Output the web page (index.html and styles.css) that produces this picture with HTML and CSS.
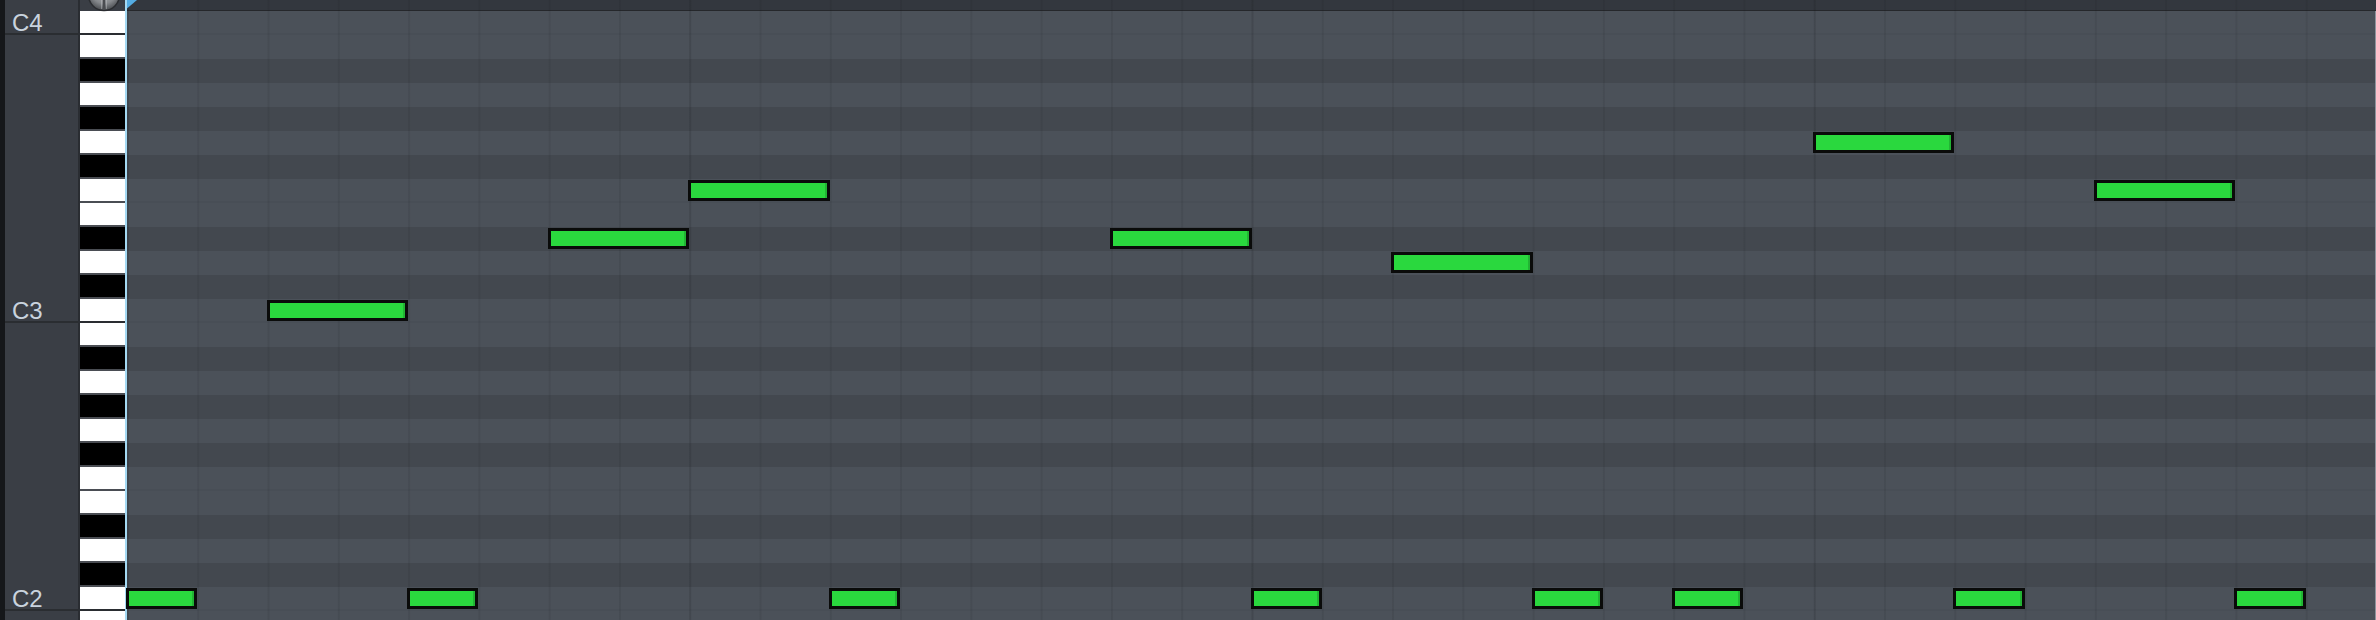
FILE: index.html
```html
<!DOCTYPE html>
<html>
<head>
<meta charset="utf-8">
<link rel="stylesheet" href="styles.css">
</head>
<body>
<div class="app">
  <div class="edge"></div>
  <div class="labels">
    <div class="lab c">C4</div><div class="lab"></div><div class="lab"></div><div class="lab"></div>
    <div class="lab"></div><div class="lab"></div><div class="lab"></div><div class="lab"></div>
    <div class="lab"></div><div class="lab"></div><div class="lab"></div><div class="lab"></div>
    <div class="lab c">C3</div><div class="lab"></div><div class="lab"></div><div class="lab"></div>
    <div class="lab"></div><div class="lab"></div><div class="lab"></div><div class="lab"></div>
    <div class="lab"></div><div class="lab"></div><div class="lab"></div><div class="lab"></div>
    <div class="lab c">C2</div><div class="lab"></div>
  </div>
  <div class="keys">
    <div class="key w c"></div><div class="key w"></div><div class="key b"></div><div class="key w"></div>
    <div class="key b"></div><div class="key w"></div><div class="key b"></div><div class="key w"></div>
    <div class="key w"></div><div class="key b"></div><div class="key w"></div><div class="key b"></div>
    <div class="key w c"></div><div class="key w"></div><div class="key b"></div><div class="key w"></div>
    <div class="key b"></div><div class="key w"></div><div class="key b"></div><div class="key w"></div>
    <div class="key w"></div><div class="key b"></div><div class="key w"></div><div class="key b"></div>
    <div class="key w c"></div><div class="key w"></div>
  </div>
  <div class="playhead"></div>
  <div class="roll">
    <div class="ruler"></div>
    <div class="lanes">
      <div class="lane w c"></div><div class="lane w"></div><div class="lane b"></div><div class="lane w"></div>
      <div class="lane b"></div><div class="lane w"></div><div class="lane b"></div><div class="lane w f"></div>
      <div class="lane w"></div><div class="lane b"></div><div class="lane w"></div><div class="lane b"></div>
      <div class="lane w c"></div><div class="lane w"></div><div class="lane b"></div><div class="lane w"></div>
      <div class="lane b"></div><div class="lane w"></div><div class="lane b"></div><div class="lane w f"></div>
      <div class="lane w"></div><div class="lane b"></div><div class="lane w"></div><div class="lane b"></div>
      <div class="lane w c"></div><div class="lane w"></div>
      <div class="notes">
        <div class="note" style="grid-area: 25 / 1 / span 1 / span 1"></div>
        <div class="note" style="grid-area: 13 / 3 / span 1 / span 2"></div>
        <div class="note" style="grid-area: 25 / 5 / span 1 / span 1"></div>
        <div class="note" style="grid-area: 10 / 7 / span 1 / span 2"></div>
        <div class="note" style="grid-area: 8 / 9 / span 1 / span 2"></div>
        <div class="note" style="grid-area: 25 / 11 / span 1 / span 1"></div>
        <div class="note" style="grid-area: 10 / 15 / span 1 / span 2"></div>
        <div class="note" style="grid-area: 25 / 17 / span 1 / span 1"></div>
        <div class="note" style="grid-area: 11 / 19 / span 1 / span 2"></div>
        <div class="note" style="grid-area: 25 / 21 / span 1 / span 1"></div>
        <div class="note" style="grid-area: 25 / 23 / span 1 / span 1"></div>
        <div class="note" style="grid-area: 6 / 25 / span 1 / span 2"></div>
        <div class="note" style="grid-area: 25 / 27 / span 1 / span 1"></div>
        <div class="note" style="grid-area: 8 / 29 / span 1 / span 2"></div>
        <div class="note" style="grid-area: 25 / 31 / span 1 / span 1"></div>
      </div>
    </div>
    <div class="beatlines"></div>
  </div>
  <svg class="knob" width="34" height="12" viewBox="0 0 34 12">
    <defs>
      <radialGradient id="kg" cx="0.5" cy="0.35" r="0.6">
        <stop offset="0" stop-color="#b4b6b9"/>
        <stop offset="0.7" stop-color="#85888c"/>
        <stop offset="1" stop-color="#55585c"/>
      </radialGradient>
    </defs>
    <circle cx="17" cy="-5" r="15.5" fill="url(#kg)" stroke="#2a2c30" stroke-width="1.5"/>
    <line x1="17" y1="-4" x2="17" y2="10" stroke="#4a4c50" stroke-width="2.2"/>
    <line x1="14.6" y1="-4" x2="14.6" y2="9" stroke="#c8cacd" stroke-width="0.8" opacity="0.6"/>
    <line x1="19.4" y1="-4" x2="19.4" y2="9" stroke="#c8cacd" stroke-width="0.8" opacity="0.6"/>
  </svg>
  <svg class="marker" width="10" height="9" viewBox="0 0 10 9">
    <polygon points="0,0 10,0 0,8.5" fill="#54ace3"/>
  </svg>
</div>
</body>
</html>
```

FILE: styles.css
```css
html, body {
  margin: 0;
  padding: 0;
}
body {
  width: 2376px;
  height: 620px;
  overflow: hidden;
  background: #3a3e45;
  font-family: "Liberation Sans", Arial, sans-serif;
}
.app {
  position: relative;
  display: flex;
  width: 2376px;
  height: 620px;
  overflow: hidden;
}
.edge {
  width: 5px;
  flex: none;
  background: #15171a;
}
.labels {
  width: 73px;
  flex: none;
  padding-top: 11px;
  background: #3a3e45;
  border-right: 2px solid #2a2d32;
}
.lab {
  height: 24px;
  box-sizing: border-box;
  padding-left: 7px;
  font-size: 24px;
  line-height: 24px;
  color: #c9d3de;
}
.lab.c {
  border-bottom: 2px solid #2a2d31;
}
.keys {
  width: 45px;
  flex: none;
  padding-top: 11px;
  background: #3a3e45;
}
.key {
  height: 24px;
  box-sizing: border-box;
  border-bottom: 2px solid #4a4d53;
}
.key.w { background: #ffffff; }
.key.b { background: #000000; }
.key.c { border-bottom-color: #2a2d31; }
.playhead {
  width: 2px;
  flex: none;
  background: #a4d9f3;
}
.roll {
  position: relative;
  flex: 1;
  display: flex;
  flex-direction: column;
}
.ruler {
  height: 10px;
  flex: none;
  background: #33373e;
  border-bottom: 1px solid #25272b;
}
.lanes {
  position: relative;
  flex: 1;
}
.lanes::after {
  content: "";
  position: absolute;
  top: 0;
  right: 0;
  bottom: 0;
  width: 1px;
  background: #8d949c;
  z-index: 3;
}
.lane {
  height: 24px;
  box-sizing: border-box;
}
.lane.w { background: #4b5159; }
.lane.b { background: #43484f; }
.lane.c, .lane.f {
  border-bottom: 2px solid #484e56;
}
.beatlines {
  position: absolute;
  inset: 0;
  z-index: 1;
  pointer-events: none;
  background-image:
    linear-gradient(to right, rgba(18, 20, 24, 0.07) 0 2px, transparent 2px),
    linear-gradient(to right, rgba(18, 20, 24, 0.09) 0 2px, transparent 2px);
  background-size: 562.25px 100%, 70.28125px 100%;
  background-repeat: repeat-x;
}
.notes {
  position: absolute;
  top: 0;
  left: 0;
  right: 0;
  z-index: 2;
  display: grid;
  grid-template-columns: repeat(32, 1fr);
  grid-template-rows: repeat(26, 24px);
}
.note {
  margin: 1px 0 2px -1px;
  box-sizing: border-box;
  background: #2ad83e;
  border: 3px solid #0a0b0a;
  box-shadow: inset -2px 0 0 #22b434;
}
.knob {
  position: absolute;
  left: 87px;
  top: 0;
  z-index: 5;
}
.marker {
  position: absolute;
  left: 127px;
  top: 0;
  z-index: 5;
}
```
